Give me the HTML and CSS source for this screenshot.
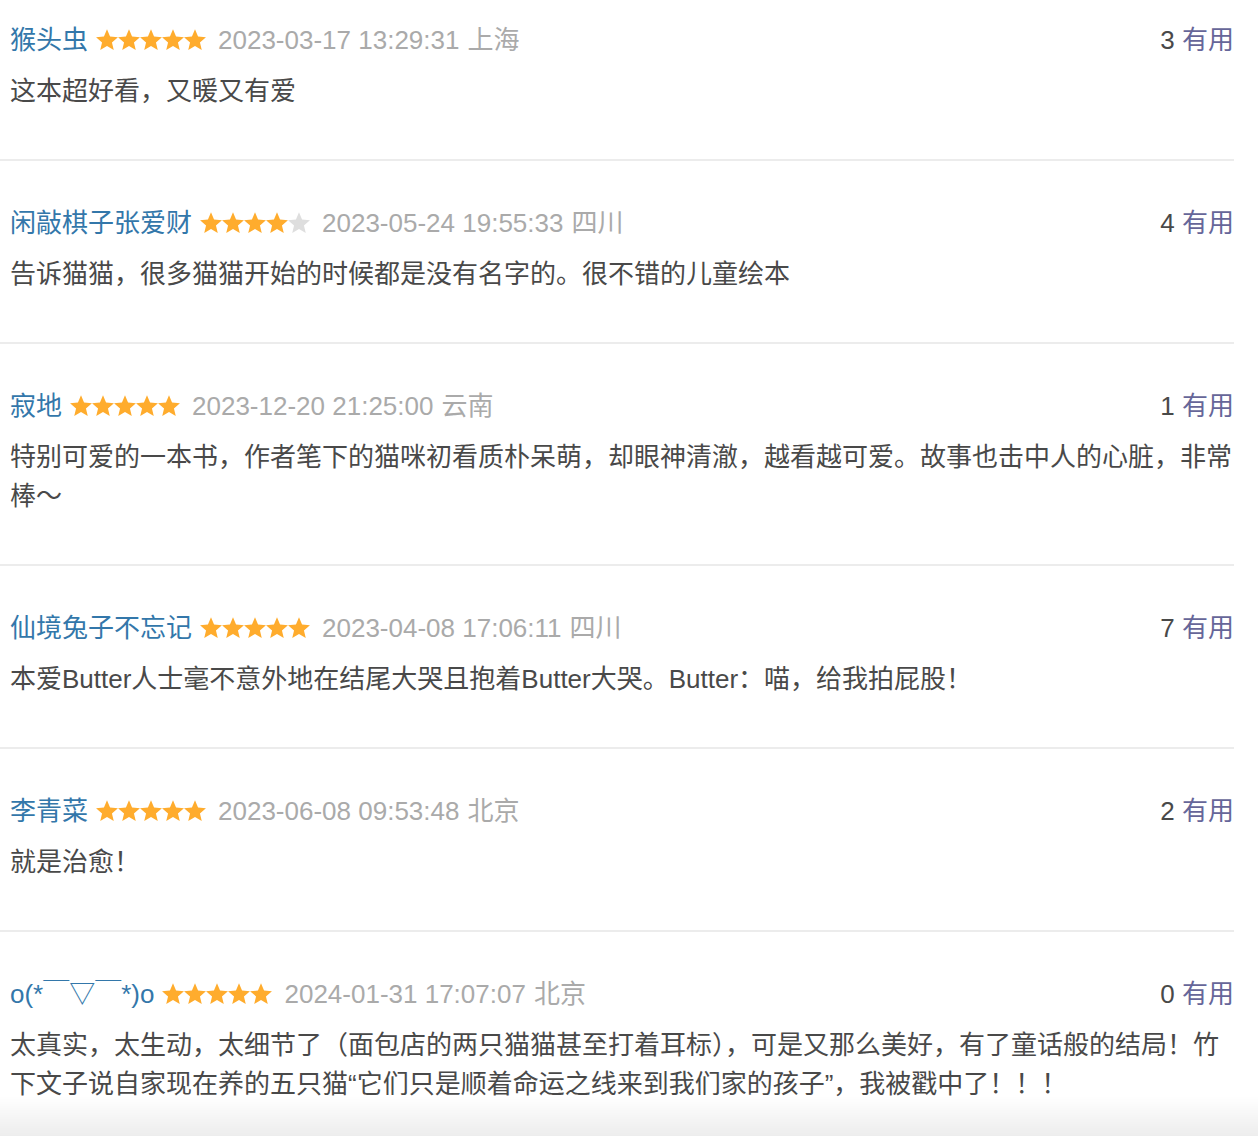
FILE: index.html
```html
<!DOCTYPE html>
<html lang="zh-CN">
<head>
<meta charset="utf-8">
<title>短评</title>
<link rel="stylesheet" href="styles.css">
</head>
<body>
<svg width="0" height="0" class="defs">
  <defs>
    <symbol id="star" viewBox="0 0 22 22">
      <polygon points="11,0.3 14.06,7.59 21.94,8.25 15.95,13.41 17.76,21.1 11,17 4.24,21.1 6.05,13.41 0.06,8.25 7.94,7.59"/>
    </symbol>
  </defs>
</svg>
<div class="comments">
  <div class="item">
    <div class="head">
      <div class="info">
        <a class="name">猴头虫</a>
        <span class="stars"><svg class="on"><use href="#star"/></svg><svg class="on"><use href="#star"/></svg><svg class="on"><use href="#star"/></svg><svg class="on"><use href="#star"/></svg><svg class="on"><use href="#star"/></svg></span>
        <span class="time">2023-03-17 13:29:31</span>
        <span class="loc">上海</span>
      </div>
      <div class="vote"><span class="count">3</span> <a class="useful">有用</a></div>
    </div>
    <p class="text">这本超好看，又暖又有爱</p>
  </div>
  <div class="item">
    <div class="head">
      <div class="info">
        <a class="name">闲敲棋子张爱财</a>
        <span class="stars"><svg class="on"><use href="#star"/></svg><svg class="on"><use href="#star"/></svg><svg class="on"><use href="#star"/></svg><svg class="on"><use href="#star"/></svg><svg class="off"><use href="#star"/></svg></span>
        <span class="time">2023-05-24 19:55:33</span>
        <span class="loc">四川</span>
      </div>
      <div class="vote"><span class="count">4</span> <a class="useful">有用</a></div>
    </div>
    <p class="text">告诉猫猫，很多猫猫开始的时候都是没有名字的。很不错的儿童绘本</p>
  </div>
  <div class="item">
    <div class="head">
      <div class="info">
        <a class="name">寂地</a>
        <span class="stars"><svg class="on"><use href="#star"/></svg><svg class="on"><use href="#star"/></svg><svg class="on"><use href="#star"/></svg><svg class="on"><use href="#star"/></svg><svg class="on"><use href="#star"/></svg></span>
        <span class="time">2023-12-20 21:25:00</span>
        <span class="loc">云南</span>
      </div>
      <div class="vote"><span class="count">1</span> <a class="useful">有用</a></div>
    </div>
    <p class="text">特别可爱的一本书，作者笔下的猫咪初看质朴呆萌，却眼神清澈，越看越可爱。故事也击中人的心脏，非常棒～</p>
  </div>
  <div class="item">
    <div class="head">
      <div class="info">
        <a class="name">仙境兔子不忘记</a>
        <span class="stars"><svg class="on"><use href="#star"/></svg><svg class="on"><use href="#star"/></svg><svg class="on"><use href="#star"/></svg><svg class="on"><use href="#star"/></svg><svg class="on"><use href="#star"/></svg></span>
        <span class="time">2023-04-08 17:06:11</span>
        <span class="loc">四川</span>
      </div>
      <div class="vote"><span class="count">7</span> <a class="useful">有用</a></div>
    </div>
    <p class="text">本爱Butter人士毫不意外地在结尾大哭且抱着Butter大哭。Butter：喵，给我拍屁股！</p>
  </div>
  <div class="item">
    <div class="head">
      <div class="info">
        <a class="name">李青菜</a>
        <span class="stars"><svg class="on"><use href="#star"/></svg><svg class="on"><use href="#star"/></svg><svg class="on"><use href="#star"/></svg><svg class="on"><use href="#star"/></svg><svg class="on"><use href="#star"/></svg></span>
        <span class="time">2023-06-08 09:53:48</span>
        <span class="loc">北京</span>
      </div>
      <div class="vote"><span class="count">2</span> <a class="useful">有用</a></div>
    </div>
    <p class="text">就是治愈！</p>
  </div>
  <div class="item">
    <div class="head">
      <div class="info">
        <a class="name">o(*￣▽￣*)o</a>
        <span class="stars"><svg class="on"><use href="#star"/></svg><svg class="on"><use href="#star"/></svg><svg class="on"><use href="#star"/></svg><svg class="on"><use href="#star"/></svg><svg class="on"><use href="#star"/></svg></span>
        <span class="time">2024-01-31 17:07:07</span>
        <span class="loc">北京</span>
      </div>
      <div class="vote"><span class="count">0</span> <a class="useful">有用</a></div>
    </div>
    <p class="text">太真实，太生动，太细节了（面包店的两只猫猫甚至打着耳标），可是又那么美好，有了童话般的结局！竹下文子说自家现在养的五只猫“它们只是顺着命运之线来到我们家的孩子”，我被戳中了！！！</p>
  </div>
</div>
<div class="fade"></div>
</body>
</html>
```

FILE: styles.css
```css
html, body {
  margin: 0;
  padding: 0;
  background: #fff;
}
body {
  font-family: "Liberation Sans", "Noto Sans CJK SC", sans-serif;
  font-size: 26px;
  color: #494949;
  overflow: hidden;
  height: 1136px;
}
.defs {
  position: absolute;
  width: 0;
  height: 0;
}
.comments {
  width: 1234px;
}
.item {
  padding: 42px 0 48px 10px;
  border-bottom: 2px solid #ececec;
}
.item:first-child {
  padding-top: 20px;
}
.head {
  display: flex;
  justify-content: space-between;
  align-items: center;
  height: 40px;
  line-height: 40px;
}
.info {
  display: flex;
  align-items: center;
  white-space: nowrap;
}
.name {
  color: #3377aa;
  text-decoration: none;
}
.stars {
  display: flex;
  margin: 0 12px 0 8px;
  height: 22px;
}
.stars svg {
  width: 22px;
  height: 22px;
}
.stars .on {
  fill: #ffac2d;
}
.stars .off {
  fill: #dedede;
}
.time {
  color: #aaaaaa;
}
.loc {
  color: #aaaaaa;
  margin-left: 8px;
}
.vote {
  white-space: nowrap;
}
.count {
  color: #494949;
}
.useful {
  color: #666699;
  text-decoration: none;
}
.text {
  margin: 12px 0 0;
  line-height: 39px;
  word-break: break-all;
}
.fade {
  position: fixed;
  left: 0;
  right: 0;
  bottom: 0;
  height: 40px;
  background: linear-gradient(to bottom, rgba(0,0,0,0), rgba(0,0,0,0.07));
  pointer-events: none;
}
```
